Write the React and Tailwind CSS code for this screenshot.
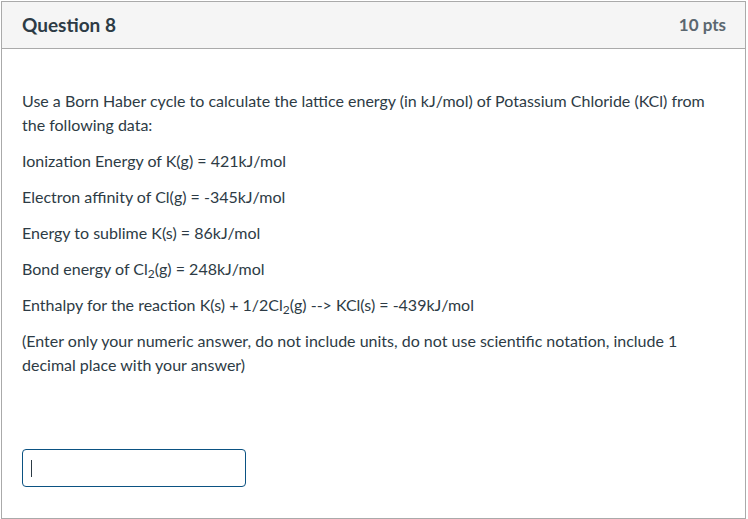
export default function App() {
  return (
    <div className="w-[748px] h-[519px] bg-white" style={{ fontFamily: "Lato, 'Liberation Sans', sans-serif" }}>
      <div className="ml-[1px] mt-[1px] w-[745px] h-[518px] border border-[#aaaaaa] flex flex-col text-[#2d3b45]">
        <div className="h-[47px] bg-[#f5f5f5] border-b border-[#aaaaaa] flex items-center justify-between pl-[20px] pr-[19px]">
          <div className="text-[19px] font-bold text-[#2d3b45]">Question 8</div>
          <div className="text-[17px] font-bold text-[#5b6770]">10 pts</div>
        </div>
        <div className="pl-[20px] pr-[19px] pt-[40px] text-[16px] leading-[24px]">
          <p className="mb-[12px]">Use a Born Haber cycle to calculate the lattice energy (in kJ/mol) of Potassium Chloride (KCl) from the following data:</p>
          <p className="mb-[12px]">Ionization Energy of K(g) = 421kJ/mol</p>
          <p className="mb-[12px]">Electron affinity of Cl(g) = -345kJ/mol</p>
          <p className="mb-[12px]">Energy to sublime K(s) = 86kJ/mol</p>
          <p className="mb-[12px]">Bond energy of Cl<sub className="text-[12px]">2</sub>(g) = 248kJ/mol</p>
          <p className="mb-[12px]">Enthalpy for the reaction K(s) + 1/2Cl<sub className="text-[12px]">2</sub>(g) --&gt; KCl(s) = -439kJ/mol</p>
          <p className="mb-[12px]">(Enter only your numeric answer, do not include units, do not use scientific notation, include 1 decimal place with your answer)</p>
          <div className="mt-[72px] w-[224px] h-[38px] border border-[#0b5282] rounded-[4px] flex items-center pl-[8px]">
            <div className="w-[1px] h-[17px] bg-[#2d3b45]"></div>
          </div>
        </div>
      </div>
    </div>
  );
}
